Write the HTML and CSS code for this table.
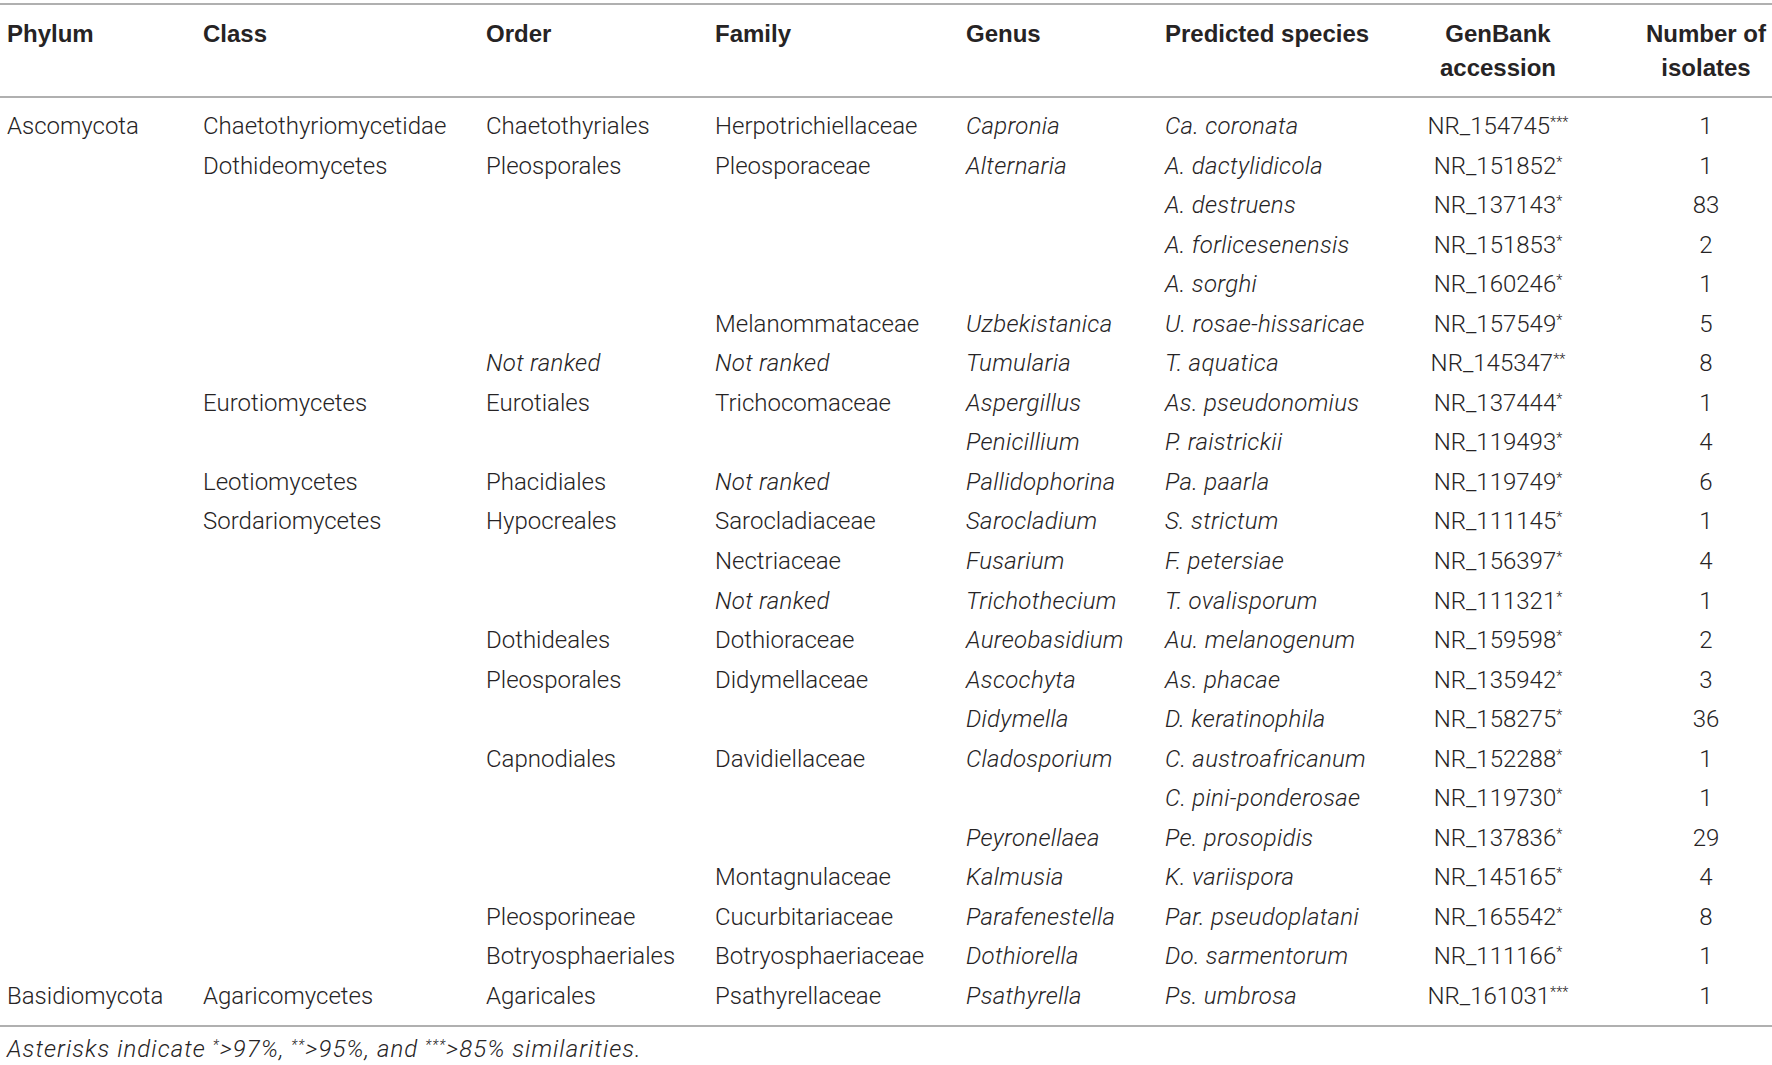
FILE: index.html
```html
<!DOCTYPE html>
<html lang="en">
<head>
<meta charset="utf-8">
<title>Fungal isolates table</title>
<link rel="stylesheet" href="styles.css">
</head>
<body>
<div class="wrap">
<table class="tax">
  <colgroup>
    <col class="c-phylum"><col class="c-class"><col class="c-order"><col class="c-family"><col class="c-genus"><col class="c-species"><col class="c-acc"><col class="c-num">
  </colgroup>
  <thead>
    <tr>
      <th>Phylum</th><th>Class</th><th>Order</th><th>Family</th><th>Genus</th><th>Predicted species</th><th class="ctr">GenBank<br>accession</th><th class="ctr">Number of<br>isolates</th>
    </tr>
  </thead>
  <tbody>
    <tr class="first"><td>Ascomycota</td><td>Chaetothyriomycetidae</td><td>Chaetothyriales</td><td>Herpotrichiellaceae</td><td class="i">Capronia</td><td class="i">Ca. coronata</td><td class="ctr">NR_154745<sup>***</sup></td><td class="ctr">1</td></tr>
    <tr><td></td><td>Dothideomycetes</td><td>Pleosporales</td><td>Pleosporaceae</td><td class="i">Alternaria</td><td class="i">A. dactylidicola</td><td class="ctr">NR_151852<sup>*</sup></td><td class="ctr">1</td></tr>
    <tr><td></td><td></td><td></td><td></td><td></td><td class="i">A. destruens</td><td class="ctr">NR_137143<sup>*</sup></td><td class="ctr">83</td></tr>
    <tr><td></td><td></td><td></td><td></td><td></td><td class="i">A. forlicesenensis</td><td class="ctr">NR_151853<sup>*</sup></td><td class="ctr">2</td></tr>
    <tr><td></td><td></td><td></td><td></td><td></td><td class="i">A. sorghi</td><td class="ctr">NR_160246<sup>*</sup></td><td class="ctr">1</td></tr>
    <tr><td></td><td></td><td></td><td>Melanommataceae</td><td class="i">Uzbekistanica</td><td class="i">U. rosae-hissaricae</td><td class="ctr">NR_157549<sup>*</sup></td><td class="ctr">5</td></tr>
    <tr><td></td><td></td><td class="i">Not ranked</td><td class="i">Not ranked</td><td class="i">Tumularia</td><td class="i">T. aquatica</td><td class="ctr">NR_145347<sup>**</sup></td><td class="ctr">8</td></tr>
    <tr><td></td><td>Eurotiomycetes</td><td>Eurotiales</td><td>Trichocomaceae</td><td class="i">Aspergillus</td><td class="i">As. pseudonomius</td><td class="ctr">NR_137444<sup>*</sup></td><td class="ctr">1</td></tr>
    <tr><td></td><td></td><td></td><td></td><td class="i">Penicillium</td><td class="i">P. raistrickii</td><td class="ctr">NR_119493<sup>*</sup></td><td class="ctr">4</td></tr>
    <tr><td></td><td>Leotiomycetes</td><td>Phacidiales</td><td class="i">Not ranked</td><td class="i">Pallidophorina</td><td class="i">Pa. paarla</td><td class="ctr">NR_119749<sup>*</sup></td><td class="ctr">6</td></tr>
    <tr><td></td><td>Sordariomycetes</td><td>Hypocreales</td><td>Sarocladiaceae</td><td class="i">Sarocladium</td><td class="i">S. strictum</td><td class="ctr">NR_111145<sup>*</sup></td><td class="ctr">1</td></tr>
    <tr><td></td><td></td><td></td><td>Nectriaceae</td><td class="i">Fusarium</td><td class="i">F. petersiae</td><td class="ctr">NR_156397<sup>*</sup></td><td class="ctr">4</td></tr>
    <tr><td></td><td></td><td></td><td class="i">Not ranked</td><td class="i">Trichothecium</td><td class="i">T. ovalisporum</td><td class="ctr">NR_111321<sup>*</sup></td><td class="ctr">1</td></tr>
    <tr><td></td><td></td><td>Dothideales</td><td>Dothioraceae</td><td class="i">Aureobasidium</td><td class="i">Au. melanogenum</td><td class="ctr">NR_159598<sup>*</sup></td><td class="ctr">2</td></tr>
    <tr><td></td><td></td><td>Pleosporales</td><td>Didymellaceae</td><td class="i">Ascochyta</td><td class="i">As. phacae</td><td class="ctr">NR_135942<sup>*</sup></td><td class="ctr">3</td></tr>
    <tr><td></td><td></td><td></td><td></td><td class="i">Didymella</td><td class="i">D. keratinophila</td><td class="ctr">NR_158275<sup>*</sup></td><td class="ctr">36</td></tr>
    <tr><td></td><td></td><td>Capnodiales</td><td>Davidiellaceae</td><td class="i">Cladosporium</td><td class="i">C. austroafricanum</td><td class="ctr">NR_152288<sup>*</sup></td><td class="ctr">1</td></tr>
    <tr><td></td><td></td><td></td><td></td><td></td><td class="i">C. pini-ponderosae</td><td class="ctr">NR_119730<sup>*</sup></td><td class="ctr">1</td></tr>
    <tr><td></td><td></td><td></td><td></td><td class="i">Peyronellaea</td><td class="i">Pe. prosopidis</td><td class="ctr">NR_137836<sup>*</sup></td><td class="ctr">29</td></tr>
    <tr><td></td><td></td><td></td><td>Montagnulaceae</td><td class="i">Kalmusia</td><td class="i">K. variispora</td><td class="ctr">NR_145165<sup>*</sup></td><td class="ctr">4</td></tr>
    <tr><td></td><td></td><td>Pleosporineae</td><td>Cucurbitariaceae</td><td class="i">Parafenestella</td><td class="i">Par. pseudoplatani</td><td class="ctr">NR_165542<sup>*</sup></td><td class="ctr">8</td></tr>
    <tr><td></td><td></td><td>Botryosphaeriales</td><td>Botryosphaeriaceae</td><td class="i">Dothiorella</td><td class="i">Do. sarmentorum</td><td class="ctr">NR_111166<sup>*</sup></td><td class="ctr">1</td></tr>
    <tr class="last"><td>Basidiomycota</td><td>Agaricomycetes</td><td>Agaricales</td><td>Psathyrellaceae</td><td class="i">Psathyrella</td><td class="i">Ps. umbrosa</td><td class="ctr">NR_161031<sup>***</sup></td><td class="ctr">1</td></tr>
  </tbody>
</table>
<p class="note">Asterisks indicate <sup>*</sup>&gt;97%, <sup>**</sup>&gt;95%, and <sup>***</sup>&gt;85% similarities.</p>
</div>
</body>
</html>
```

FILE: styles.css
```css
html, body {
  margin: 0;
  padding: 0;
  background: #ffffff;
}

body {
  font-family: Roboto, "Liberation Sans", Arial, sans-serif;
  font-weight: 300;
  color: #262324;
  font-size: 24px;
}

.wrap {
  width: 1772px;
  padding-top: 3px;
}

.tax {
  width: 1772px;
  border-collapse: collapse;
  table-layout: fixed;
  border-top: 2px solid #b0b0b0;
  border-bottom: 2px solid #b0b0b0;
}

.c-phylum { width: 196px; }
.c-class { width: 283px; }
.c-order { width: 229px; }
.c-family { width: 251px; }
.c-genus { width: 199px; }
.c-species { width: 198px; }
.c-acc { width: 284px; }
.c-num { width: 132px; }

.tax th {
  font-family: "Liberation Sans", Arial, sans-serif;
  font-weight: 700;
  font-size: 24px;
  text-align: left;
  vertical-align: top;
  line-height: 34px;
  padding: 12px 0 11px 7px;
  border-bottom: 2px solid #b0b0b0;
  white-space: nowrap;
}

.tax td {
  padding: 0 0 0 7px;
  line-height: 39.55px;
  height: 39.55px;
  white-space: nowrap;
  vertical-align: middle;
}

.tax .ctr {
  text-align: center;
  padding-left: 0;
}

.tax tr.first td { padding-top: 9px; }
.tax tr.last td { padding-bottom: 8px; }

.i {
  font-style: italic;
  letter-spacing: 0.3px;
}

sup {
  font-size: 0.6em;
  line-height: 0;
  vertical-align: 0.5em;
}

.note {
  margin: 0;
  padding: 5px 0 0 7px;
  font-style: italic;
  letter-spacing: 1.05px;
  line-height: 34px;
}
```
